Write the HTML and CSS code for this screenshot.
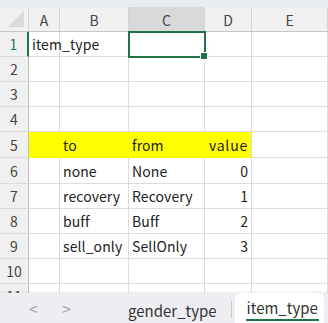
FILE: index.html
```html
<!DOCTYPE html>
<html lang="ja">
<head>
    <meta charset="UTF-8">
    <title>item_type</title>
    <link rel="stylesheet" href="styles.css">
</head>
<body>
    <div class="app">
        <div class="topbar"></div>
        <div class="sheet">
            <table class="grid">
                <colgroup>
                    <col class="c-head"><col class="c-a"><col class="c-b"><col class="c-c"><col class="c-d"><col class="c-e">
                </colgroup>
                <tr class="colhead">
                    <th class="corner"><span class="tri"></span></th>
                    <th>A</th><th>B</th><th class="sel">C</th><th>D</th><th>E</th>
                </tr>
                <tr>
                    <th class="rowhead sel">1</th>
                    <td class="txt">item_type</td><td></td><td class="active"><span class="handle"></span></td><td></td><td></td>
                </tr>
                <tr><th class="rowhead">2</th><td></td><td></td><td></td><td></td><td></td></tr>
                <tr><th class="rowhead">3</th><td></td><td></td><td></td><td></td><td></td></tr>
                <tr><th class="rowhead">4</th><td></td><td></td><td></td><td></td><td></td></tr>
                <tr class="tall">
                    <th class="rowhead">5</th>
                    <td class="fill"></td><td class="fill txt">to</td><td class="fill txt">from</td><td class="fill txt num">value</td><td></td>
                </tr>
                <tr class="tall">
                    <th class="rowhead">6</th>
                    <td></td><td class="txt">none</td><td class="txt">None</td><td class="txt num">0</td><td></td>
                </tr>
                <tr>
                    <th class="rowhead">7</th>
                    <td></td><td class="txt">recovery</td><td class="txt">Recovery</td><td class="txt num">1</td><td></td>
                </tr>
                <tr>
                    <th class="rowhead">8</th>
                    <td></td><td class="txt">buff</td><td class="txt">Buff</td><td class="txt num">2</td><td></td>
                </tr>
                <tr>
                    <th class="rowhead">9</th>
                    <td></td><td class="txt">sell_only</td><td class="txt">SellOnly</td><td class="txt num">3</td><td></td>
                </tr>
                <tr><th class="rowhead">10</th><td></td><td></td><td></td><td></td><td></td></tr>
                <tr><th class="rowhead">11</th><td></td><td></td><td></td><td></td><td></td></tr>
            </table>
        </div>
        <div class="tabs">
            <div class="nav">
                <span class="arrow">&lt;</span>
                <span class="arrow">&gt;</span>
            </div>
            <div class="tab">gender_type</div>
            <div class="sep"></div>
            <div class="tab current"><span>item_type</span></div>
        </div>
    </div>
</body>
</html>
```

FILE: styles.css
```css
body {
    margin: 0;
    font-family: "Noto Sans CJK JP", "Noto Sans", sans-serif;
    background-color: #ffffff;
}
.app {
    width: 328px;
    height: 323px;
    display: flex;
    flex-direction: column;
    overflow: hidden;
}
.topbar {
    height: 7px;
    background-color: #e9ecef;
    flex: none;
}
.sheet {
    flex: 1;
    overflow: hidden;
}
.grid {
    border-collapse: separate;
    border-spacing: 0;
    table-layout: fixed;
    width: 328px;
    font-size: 14px;
    color: #222;
}
.c-head { width: 29px; }
.c-a { width: 31px; }
.c-b { width: 69px; }
.c-c { width: 76px; }
.c-d { width: 47px; }
.c-e { width: 76px; }
.grid th,
.grid td {
    box-sizing: border-box;
    padding: 0;
    border-right: 1px solid #dcdcdc;
    border-bottom: 1px solid #dcdcdc;
    height: 25px;
    line-height: 22px;
    white-space: nowrap;
    overflow: visible;
}
.grid tr.tall th,
.grid tr.tall td {
    height: 26px;
}
.colhead th {
    height: 25px;
    background-color: #f0f0f0;
    font-weight: normal;
    color: #444;
    font-size: 14px;
    text-align: center;
    border-right: 1px solid #d4d4d4;
    border-bottom: 1px solid #c6c6c6;
    vertical-align: bottom;
}
.colhead th.sel {
    background-color: #d9d9d9;
    border-bottom: 1px solid #217346;
}
.corner {
    position: relative;
}
.tri {
    position: absolute;
    right: 4px;
    bottom: 4px;
    width: 0;
    height: 0;
    border-left: 16px solid transparent;
    border-bottom: 16px solid #dadada;
}
.rowhead {
    background-color: #f0f0f0;
    font-weight: normal;
    color: #444;
    text-align: center;
    border-right-color: #bdbdbd !important;
}
.rowhead.sel {
    color: #217346;
    border-right: 2px solid #217346 !important;
}
.txt {
    padding-left: 3px !important;
    letter-spacing: 0.1px;
}
.num {
    text-align: right;
    padding-left: 0 !important;
    padding-right: 3px !important;
}
.fill {
    background-color: #ffff00;
    border-right-color: #ffff00 !important;
    border-bottom-color: #ffff00 !important;
}
.fill.num {
    border-right-color: #dcdcdc !important;
    letter-spacing: 0.8px;
}
.active {
    position: relative;
    outline: 2px solid #217346;
    outline-offset: -1px;
}
.handle {
    position: absolute;
    right: -4px;
    bottom: -4px;
    width: 6px;
    height: 6px;
    background-color: #217346;
    border: 1px solid #ffffff;
}
.tabs {
    height: 30px;
    flex: none;
    background-color: #eceef1;
    display: flex;
    align-items: stretch;
    box-shadow: 0 -1px 2px rgba(0, 0, 0, 0.08);
    font-size: 15px;
    color: #333;
}
.nav {
    width: 98px;
    flex: none;
    display: flex;
    gap: 24px;
    padding-left: 29px;
    box-sizing: border-box;
    align-items: center;
}
.arrow {
    color: #a8a8a8;
    font-size: 16px;
}
.tab {
    flex: none;
    padding: 4px 14px 0 30px;
    display: flex;
    align-items: center;
}
.sep {
    flex: none;
    width: 1px;
    margin: 8px 3px 5px 0;
    background-color: #c8c8c8;
}
.tab.current {
    background-color: #ffffff;
    border-radius: 6px 6px 0 0;
    margin-right: 4px;
    padding: 2px 9px 0 11px;
    flex: 1;
    min-width: 0;
}
.tab.current span {
    border-bottom: 2px solid #217346;
    padding: 0 1px 1px 1px;
    line-height: 20px;
}
```
